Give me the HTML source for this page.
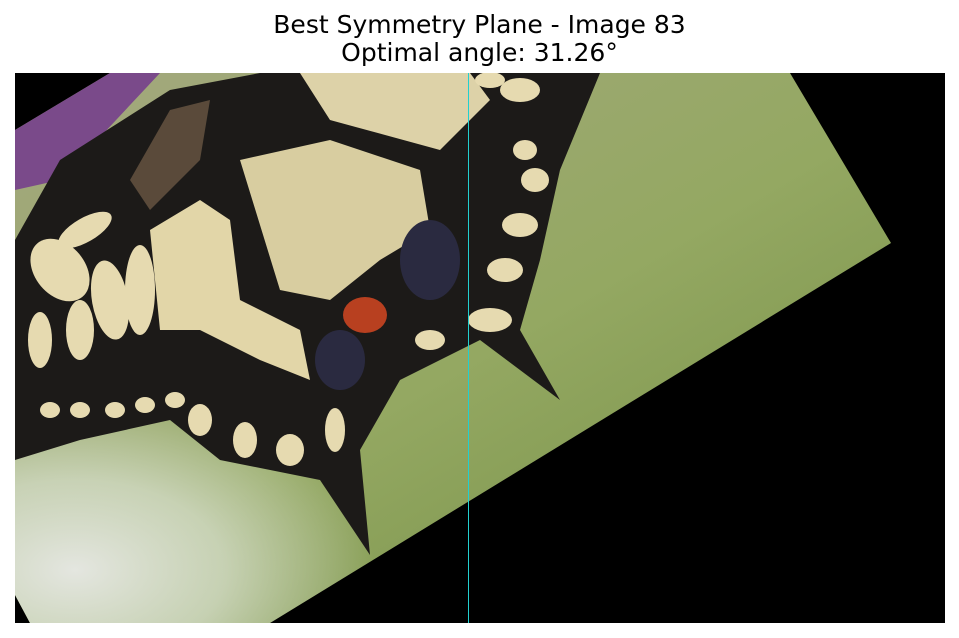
<!DOCTYPE html>
<html><head><meta charset="utf-8"><style>
body{margin:0;background:#fff;width:959px;height:638px;overflow:hidden;font-family:"DejaVu Sans","Liberation Sans",sans-serif}
.t{position:absolute;left:0;width:959px;text-align:center;font-size:25px;line-height:29px;color:#000}
</style></head><body>
<div class="t" style="top:10px">Best Symmetry Plane - Image 83</div>
<div class="t" style="top:38px">Optimal angle: 31.26°</div>
<svg style="position:absolute;left:0;top:0" width="959" height="638">
<defs>
<clipPath id="c"><polygon points="110,73 790,73 891,243 270,623 30,623 15,595 15,130"/></clipPath>
<linearGradient id="g" x1="0" y1="0" x2="1" y2="1">
<stop offset="0" stop-color="#a4a880"/><stop offset="0.5" stop-color="#94a862"/><stop offset="1" stop-color="#6e8a40"/></linearGradient>
<radialGradient id="w" cx="0.15" cy="0.8" r="0.6"><stop offset="0" stop-color="#e4e6e0"/><stop offset="0.5" stop-color="#d4dcc8" stop-opacity="0.8"/><stop offset="1" stop-color="#d4dcc8" stop-opacity="0"/></radialGradient>
</defs>
<rect x="15" y="73" width="930" height="550" fill="#000"/>
<g clip-path="url(#c)">
<rect x="0" y="73" width="959" height="560" fill="url(#g)"/>
<rect x="0" y="330" width="500" height="300" fill="url(#w)"/>
<polygon points="15,110 100,73 160,73 60,180 15,190" fill="#7a4a8a"/>
<polygon points="15,240 60,160 170,90 260,73 600,73 560,170 540,260 520,330 560,400 480,340 400,380 360,450 370,555 320,480 220,460 170,420 80,440 15,460" fill="#1c1a18"/>
<polygon points="300,73 470,73 490,100 440,150 330,120" fill="#ddd2a8"/>
<polygon points="240,160 330,140 420,170 430,230 380,260 330,300 280,290" fill="#d8cda0"/>
<polygon points="150,230 200,200 230,220 240,300 300,330 310,380 260,360 200,330 160,330" fill="#e2d6a8"/>
<g fill="#e6dab0">
<ellipse cx="60" cy="270" rx="25" ry="35" transform="rotate(-40 60 270)"/>
<ellipse cx="110" cy="300" rx="18" ry="40" transform="rotate(-10 110 300)"/>
<ellipse cx="80" cy="330" rx="14" ry="30"/>
<ellipse cx="40" cy="340" rx="12" ry="28"/>
<ellipse cx="140" cy="290" rx="15" ry="45"/>
<ellipse cx="85" cy="230" rx="30" ry="12" transform="rotate(-30 85 230)"/>
<ellipse cx="50" cy="410" rx="10" ry="8"/><ellipse cx="80" cy="410" rx="10" ry="8"/><ellipse cx="115" cy="410" rx="10" ry="8"/><ellipse cx="145" cy="405" rx="10" ry="8"/><ellipse cx="175" cy="400" rx="10" ry="8"/>
<ellipse cx="200" cy="420" rx="12" ry="16"/><ellipse cx="245" cy="440" rx="12" ry="18"/><ellipse cx="290" cy="450" rx="14" ry="16"/><ellipse cx="335" cy="430" rx="10" ry="22"/>
<ellipse cx="490" cy="320" rx="22" ry="12"/><ellipse cx="505" cy="270" rx="18" ry="12"/><ellipse cx="520" cy="225" rx="18" ry="12"/><ellipse cx="535" cy="180" rx="14" ry="12"/><ellipse cx="525" cy="150" rx="12" ry="10"/>
<ellipse cx="430" cy="340" rx="15" ry="10"/>
<ellipse cx="520" cy="90" rx="20" ry="12"/><ellipse cx="490" cy="80" rx="15" ry="8"/>
</g>
<polygon points="130,180 170,110 210,100 200,160 150,210" fill="#5a4a3a"/>
<ellipse cx="365" cy="315" rx="22" ry="18" fill="#b84020"/>
<ellipse cx="430" cy="260" rx="30" ry="40" fill="#2a2a40"/>
<ellipse cx="340" cy="360" rx="25" ry="30" fill="#2a2a40"/>
</g>
<line x1="468.5" y1="73" x2="468.5" y2="623" stroke="#22d0d0" stroke-width="1"/>
</svg>
</body></html>
